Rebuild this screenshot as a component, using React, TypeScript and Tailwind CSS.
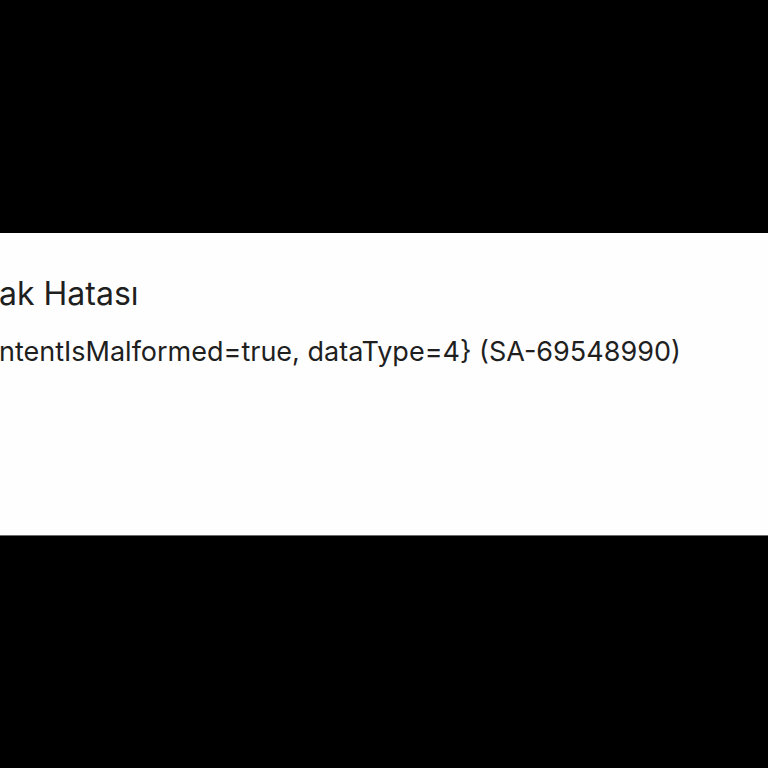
import React from "react";

export default function App() {
  return (
    <div className="w-[768px] h-[768px] bg-black flex flex-col overflow-hidden" style={{ fontFamily: "Inter, 'Noto Sans', sans-serif" }}>
      <div className="h-[233px] shrink-0" />
      <div className="h-[302px] shrink-0 bg-[#fefefe] flex flex-col text-[#1f1f1f] overflow-hidden">
        <div className="mt-[41px] text-[32px] leading-[40px] whitespace-nowrap -ml-[1px]">ak Hatası</div>
        <div className="mt-[22px] text-[27px] leading-[32px] whitespace-nowrap -ml-[1px]">{"ntentIsMalformed=true, dataType=4} (SA-69548990)"}</div>
      </div>
      <div className="h-[1px] bg-[#6b6b6b]" />
    </div>
  );
}
